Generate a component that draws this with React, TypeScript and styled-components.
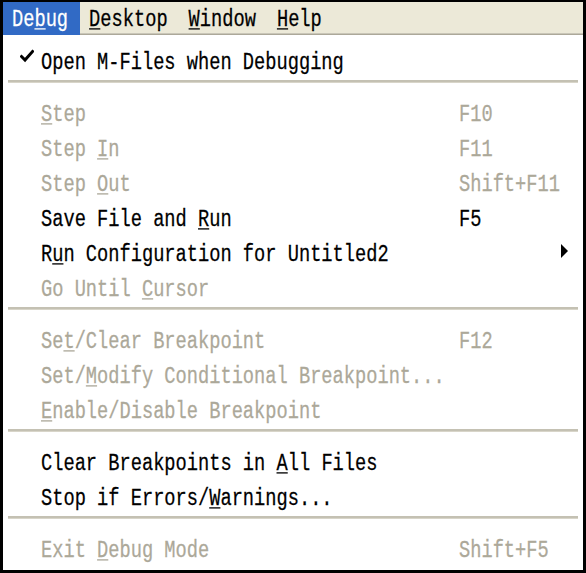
import React from 'react';
import styled, { createGlobalStyle } from 'styled-components';

const Global = createGlobalStyle`
  html, body { margin: 0; padding: 0; background: #fff; }
  body { width: 586px; height: 573px; overflow: hidden; }
`;

const Frame = styled.div`
  width: 586px;
  height: 573px;
  box-sizing: border-box;
  border: 3px solid #000;
  border-top-width: 2px;
  background: #fff;
  display: flex;
  flex-direction: column;
  font-family: "Liberation Mono", "Courier New", monospace;
  font-size: 18.7px;
  -webkit-font-smoothing: none;
`;

const MenuBar = styled.div`
  display: flex;
  height: 33px;
  background: #ece9d8;
  box-shadow: inset 0 -1px 0 #aca899, inset 0 -2px 0 #c9c6b8;
`;

const BarItem = styled.div<{ $active?: boolean }>`
  display: flex;
  align-items: center;
  padding: 0 12px 2px 9px;
  background: ${(p) => (p.$active ? '#316ac5' : 'transparent')};
  color: ${(p) => (p.$active ? '#fff' : '#000')};
`;

const Body = styled.div`
  display: flex;
  flex-direction: column;
  padding: 8px 0 4px;
`;

const Row = styled.div<{ $disabled?: boolean }>`
  display: grid;
  grid-template-columns: 38px 418px minmax(0, 1fr) 20px;
  align-items: center;
  height: 35px;
  padding-right: 8px;
  color: ${(p) => (p.$disabled ? '#aca899' : '#000')};
`;

const CheckCell = styled.div`
  display: flex;
  align-items: center;
  padding-left: 17px;
  margin-top: -9px;
`;

const Txt = styled.span`
  display: inline-block;
  white-space: pre;
  transform: translateY(1px) scaleY(1.32);
  -webkit-text-stroke: 0.2px currentColor;
`;

const Mn = styled.span`
  text-decoration: underline;
  text-decoration-thickness: 1px;
  text-underline-offset: 2px;
`;

const Shortcut = styled.div`
  white-space: nowrap;
`;

const ArrowCell = styled.div`
  display: flex;
  align-items: center;
  justify-content: center;
  margin-top: -4px;
`;

const Sep = styled.div`
  height: 3px;
  margin: 2px 5px 12px;
  background: #c4c1b3;
  box-shadow: inset 0 -1px 0 #d8d5c9;
`;

function Label({ text }: { text: string }) {
  const i = text.indexOf('&');
  if (i < 0) return <Txt>{text}</Txt>;
  return (
    <Txt>
      {text.slice(0, i)}
      <Mn>{text[i + 1]}</Mn>
      {text.slice(i + 2)}
    </Txt>
  );
}

type Item =
  | { sep: true }
  | {
      sep?: false;
      label: string;
      key?: string;
      disabled?: boolean;
      checked?: boolean;
      sub?: boolean;
    };

const items: Item[] = [
  { label: 'Open M-Files when Debugging', checked: true },
  { sep: true },
  { label: '&Step', key: 'F10', disabled: true },
  { label: 'Step &In', key: 'F11', disabled: true },
  { label: 'Step &Out', key: 'Shift+F11', disabled: true },
  { label: 'Save File and &Run', key: 'F5' },
  { label: 'R&un Configuration for Untitled2', sub: true },
  { label: 'Go Until &Cursor', disabled: true },
  { sep: true },
  { label: 'Se&t/Clear Breakpoint', key: 'F12', disabled: true },
  { label: 'Set/&Modify Conditional Breakpoint...', disabled: true },
  { label: '&Enable/Disable Breakpoint', disabled: true },
  { sep: true },
  { label: 'Clear Breakpoints in &All Files' },
  { label: 'Stop if Errors/&Warnings...' },
  { sep: true },
  { label: 'Exit &Debug Mode', key: 'Shift+F5', disabled: true },
];

const bar = ['De&bug', '&Desktop', '&Window', '&Help'];

export default function App() {
  return (
    <>
      <Global />
      <Frame>
        <MenuBar>
          {bar.map((b, i) => (
            <BarItem key={b} $active={i === 0}>
              <Label text={b} />
            </BarItem>
          ))}
        </MenuBar>
        <Body>
          {items.map((it, i) =>
            it.sep ? (
              <Sep key={i} />
            ) : (
              <Row key={i} $disabled={it.disabled}>
                <CheckCell>
                  {it.checked && (
                    <svg width="14" height="14" viewBox="0 0 14 14">
                      <path
                        d="M1.5 7.5 L5 11 L12.5 2.5"
                        fill="none"
                        stroke="#000"
                        strokeWidth="3"
                        strokeLinecap="square"
                      />
                    </svg>
                  )}
                </CheckCell>
                <div>
                  <Label text={it.label} />
                </div>
                <Shortcut>{it.key && <Txt>{it.key}</Txt>}</Shortcut>
                <ArrowCell>
                  {it.sub && (
                    <svg width="8" height="14" viewBox="0 0 8 14">
                      <path d="M0 0 L7 7 L0 14 Z" fill="#000" />
                    </svg>
                  )}
                </ArrowCell>
              </Row>
            )
          )}
        </Body>
      </Frame>
    </>
  );
}
